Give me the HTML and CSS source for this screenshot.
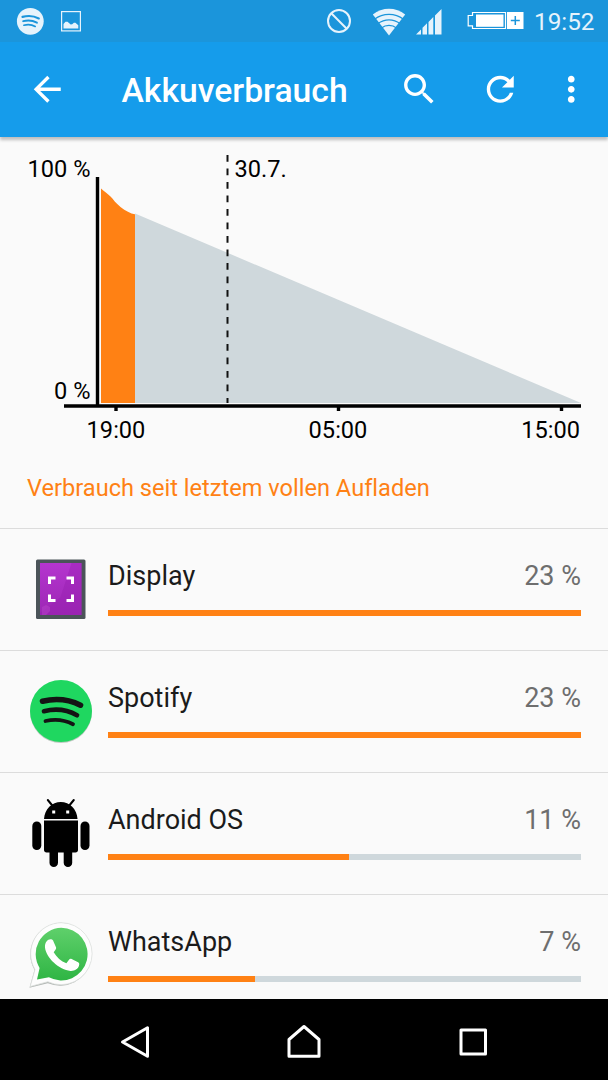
FILE: index.html
```html
<!DOCTYPE html>
<html lang="de">
<head>
  <meta charset="UTF-8">
  <meta name="viewport" content="width=device-width, initial-scale=1.0">
  <title>Akkuverbrauch</title>
  <link rel="stylesheet" href="styles.css">
</head>
<body>
  <div class="screen">
    <!-- Status bar -->
    <div class="status-bar">
      <svg class="status-spotify" width="28" height="28" viewBox="0 0 28 28">
        <circle cx="14.300" cy="14.300" r="13.400" fill="#e6f3fc"/>
        <g fill="none" stroke="#1b95db" stroke-linecap="round">
          <path d="M6.500 9.900c5.500-1.500 11.500-1 16.300 1.500" stroke-width="2.200"/>
          <path d="M7.200 14.200c4.800-1.300 9.500-.8 13.700 1.500" stroke-width="1.900"/>
          <path d="M7.900 18.200c3.900-1 7.900-.7 11.300 1.300" stroke-width="1.600"/>
        </g>
      </svg>
      <svg class="status-picture" width="20" height="21" viewBox="0 0 20 21">
        <rect x=".6" y=".6" width="18.800" height="19.300" fill="none" stroke="#e6f3fc" stroke-width="1.200"/>
        <path d="M2.500 17.500v-4.600l2-2.200h2l3.200 2.900 1.500-.3 1.700-1.600h1.500l2.900 2.600v3.200z" fill="#e6f3fc"/>
      </svg>
      <div class="spacer"></div>
      <svg class="status-block" width="24" height="24" viewBox="0 0 24 24">
        <circle cx="12" cy="12" r="11" fill="none" stroke="#e6f3fc" stroke-width="2"/>
        <path d="M4.300 4.300l15.400 15.400" stroke="#e6f3fc" stroke-width="2"/>
      </svg>
      <svg class="status-wifi" width="34" height="28" viewBox="0 0 34 28">
        <path d="M17 27.500L.8 6.400C10 -1.100 24 -1.100 33.200 6.400z" fill="#e6f3fc"/>
        <g fill="none" stroke="#1b95db" stroke-width="1.200">
          <path d="M2.500 11.200c8.500-6.500 20.500-6.500 29 0"/>
          <path d="M6 15.600c6.500-5 15.500-5 22 0"/>
          <path d="M9.500 20c4.300-3.500 10.700-3.500 15 0"/>
        </g>
      </svg>
      <svg class="status-signal" width="26" height="26" viewBox="0 0 26 26">
        <path d="M0 25.500l5-5v5zM6.500 25.500v-6.800l4.500-4.400v11.200zM12.500 25.500v-12.600l4.800-4.800v17.400zM19 25.500V6.500L25.500 0v25.500z" fill="#e6f3fc"/>
      </svg>
      <svg class="status-battery" width="57" height="20" viewBox="0 0 57 20">
        <path d="M5.500 1.500h33v16h-33v-2.700H1.200V4.500h4.300z" fill="none" stroke="#fff" stroke-width="1.200"/>
        <rect x="9" y="3.500" width="27.500" height="12.300" fill="#fff"/>
        <rect x="40" y="1" width="16.500" height="17" fill="#fff"/>
        <path d="M48.300 5v9M43.800 9.500h9" stroke="#1b95db" stroke-width="1.500"/>
      </svg>
      <span class="clock">19:52</span>
    </div>

    <!-- Toolbar -->
    <header class="toolbar">
      <svg class="icon" viewBox="0 0 24 24"><path d="M20 11H7.830l5.590-5.590L12 4l-8 8 8 8 1.410-1.410L7.830 13H20v-2z"/></svg>
      <h1>Akkuverbrauch</h1>
      <svg class="icon" viewBox="0 0 24 24"><path d="M15.500 14h-.79l-.28-.27C15.410 12.590 16 11.110 16 9.500 16 5.910 13.090 3 9.500 3S3 5.910 3 9.500 5.910 16 9.500 16c1.610 0 3.090-.59 4.230-1.570l.27.28v.79l5 4.990L20.490 19l-4.990-5zm-6 0C7.010 14 5 11.990 5 9.500S7.010 5 9.500 5 14 7.010 14 9.500 11.990 14 9.500 14z"/></svg>
      <svg class="icon icon-refresh" viewBox="0 0 24 24"><path d="M17.650 6.350C16.200 4.900 14.210 4 12 4c-4.420 0-7.990 3.580-7.990 8s3.570 8 7.990 8c3.730 0 6.840-2.550 7.730-6h-2.080c-.82 2.330-3.040 4-5.650 4-3.310 0-6-2.690-6-6s2.690-6 6-6c1.660 0 3.140.69 4.220 1.780L13 11h7V4l-2.350 2.350z"/></svg>
      <svg class="icon icon-more" viewBox="0 0 24 24"><path d="M12 8c1.100 0 2-.9 2-2s-.9-2-2-2-2 .9-2 2 .9 2 2 2zm0 2c-1.100 0-2 .9-2 2s.9 2 2 2 2-.9 2-2-.9-2-2-2zm0 6c-1.100 0-2 .9-2 2s.9 2 2 2 2-.9 2-2-.9-2-2-2z"/></svg>
    </header>

    <main class="content">
      <!-- Battery history chart -->
      <svg class="chart" width="608" height="311" viewBox="0 137 608 311">
        <path d="M135 213.500L581 403H135z" fill="#cfd8dc"/>
        <path d="M101 188.500c3 3 6 4.500 9.500 8 3 3 5 6.500 10 10.500 5 4 10 6.500 14.500 7.300V403h-34z" fill="#ff8114"/>
        <path d="M227.500 155v248" class="day-line"/>
        <path d="M97.500 177v229M64 406h517" class="axis"/>
        <path d="M116 406v5M338.500 406v5M561.500 406v5" class="axis"/>
        <text x="90.500" y="177" text-anchor="end">100 %</text>
        <text x="90.500" y="399" text-anchor="end">0 %</text>
        <text x="234.500" y="177">30.7.</text>
        <text x="116" y="437.500" text-anchor="middle">19:00</text>
        <text x="338" y="437.500" text-anchor="middle">05:00</text>
        <text x="580" y="437.500" text-anchor="end">15:00</text>
      </svg>

      <h2>Verbrauch seit letztem vollen Aufladen</h2>

      <ul class="usage">
        <li>
          <svg class="app-icon" viewBox="0 0 68 72">
            <defs>
              <linearGradient id="purple" x1="0" y1="0" x2="0" y2="1">
                <stop offset="0" stop-color="#b535cf"/>
                <stop offset="1" stop-color="#9c27b4"/>
              </linearGradient>
            </defs>
            <rect x="9" y="6.500" width="49.500" height="59.500" rx="1.500" fill="#4b5459"/>
            <rect x="13" y="10" width="41.500" height="52" fill="url(#purple)"/>
            <path d="M44.500 10h10v52H13v-1.500L33.500 44z" fill="#951eae" opacity=".4"/>
            <path d="M15 54l4-2 4 2v4l-4 4h-4z" fill="#b744ca" opacity=".5"/>
            <path d="M22.500 31v-6h6M39.500 25h6v6M22.500 41.500v6h6M39.500 47.500h6v-6" fill="none" stroke="#fff" stroke-width="3"/>
          </svg>
          <div class="usage-body">
            <div class="usage-text"><span>Display</span><span class="percent">23 %</span></div>
            <div class="bar"><div class="bar-fill" style="width: 100%"></div></div>
          </div>
        </li>
        <li>
          <svg class="app-icon" viewBox="0 0 68 72">
            <circle cx="34" cy="37" r="31" fill="#bfc9c2"/>
            <circle cx="34" cy="36" r="31" fill="#1fd760"/>
            <g fill="none" stroke="#141414" stroke-linecap="round">
              <path d="M15.500 26.200c13-3 26-2 38 4" stroke-width="5.600"/>
              <path d="M17 36.200c11.500-2.800 23-1.600 33 4" stroke-width="4.700"/>
              <path d="M18.500 46c9.500-2.200 19-1.200 27.500 3.200" stroke-width="3.800"/>
            </g>
          </svg>
          <div class="usage-body">
            <div class="usage-text"><span>Spotify</span><span class="percent">23 %</span></div>
            <div class="bar"><div class="bar-fill" style="width: 100%"></div></div>
          </div>
        </li>
        <li>
          <svg class="app-icon" viewBox="0 0 68 72">
            <path d="M17 22C17.500 12 25 5 33.800 5s16.200 7 16.700 17z"/>
            <path d="M20.800 3l4.500 5.500M46.800 3l-4.500 5.500" stroke="#000" stroke-width="2" stroke-linecap="round"/>
            <path d="M17 23.500h34V53c0 1.500-1 2.500-2.500 2.500h-29C18 55.500 17 54.500 17 53z"/>
            <rect x="5.300" y="24.500" width="9" height="28.500" rx="4.500"/>
            <rect x="53.500" y="24.500" width="9" height="28.500" rx="4.500"/>
            <rect x="22.500" y="46" width="8.500" height="24" rx="4.250"/>
            <rect x="36.700" y="46" width="8.500" height="24" rx="4.250"/>
            <rect x="25.200" y="13.500" width="3" height="3" fill="#fff"/>
            <rect x="39.200" y="13.500" width="3" height="3" fill="#fff"/>
          </svg>
          <div class="usage-body">
            <div class="usage-text"><span>Android OS</span><span class="percent">11 %</span></div>
            <div class="bar"><div class="bar-fill" style="width: 51%"></div></div>
          </div>
        </li>
        <li>
          <svg class="app-icon" viewBox="0 0 68 72">
            <defs>
              <linearGradient id="green" x1="0" y1="0" x2="0" y2="1">
                <stop offset="0" stop-color="#5fd06b"/>
                <stop offset="1" stop-color="#2fb544"/>
              </linearGradient>
            </defs>
            <path d="M34.300 3.800a31.500 31.500 0 1 1-13.500 60.500L2.500 68.800 7.500 51A31.500 31.500 0 0 1 34.300 3.800z" fill="#b4b9b6"/>
            <path d="M34.300 3.700a31 31 0 1 1-13.500 59L3.200 67.500 8 50.500A31 31 0 0 1 34.300 3.700z" fill="#fdfdfd" stroke="#dcdfdd" stroke-width=".8"/>
            <path d="M34.300 8.800a26.300 26.300 0 1 1-12.400 49.500L10 60.500l2.600-11.600A26.300 26.300 0 0 1 34.300 8.800z" fill="url(#green)"/>
            <path d="M19.500 22.500c1.500-2 3.500-2.700 5.500-2 1 .4 1.300 1.500 1.700 2.500l2.200 5c.5 1.200.2 2-.6 3l-1.600 2.200c3 5 7.300 9 12.700 11.100l2.600-3.500c.7-1 1.500-1.300 2.600-.8l6.500 3.300c1 .5 1.300 1.200 1.100 2.500-.7 4.200-4.500 6.300-8.700 6.100C32 51 19 38.500 18 28.500c-.2-2.500.3-4.500 1.500-6z" fill="#fff"/>
          </svg>
          <div class="usage-body">
            <div class="usage-text"><span>WhatsApp</span><span class="percent">7 %</span></div>
            <div class="bar"><div class="bar-fill" style="width: 31%"></div></div>
          </div>
        </li>
      </ul>
    </main>

    <!-- Navigation bar -->
    <nav class="nav-bar">
      <svg width="34" height="36" viewBox="0 0 34 36"><path d="M29.500 4.800v28.400L4.500 19z"/></svg>
      <svg width="34" height="36" viewBox="0 0 34 36"><path d="M2 33.200V16.500L17 3.500l15 13v16.700z"/></svg>
      <svg width="34" height="36" viewBox="0 0 34 36"><path d="M5 7h24.500v24H5z"/></svg>
    </nav>
  </div>
</body>
</html>
```
FILE: styles.css
```css
* {
  box-sizing: border-box;
}
body {
  margin: 0;
  font-family: Roboto, sans-serif;
  font-variant-ligatures: none;
  color: #1b1b1b;
  background-color: #fafafa;
}
svg {
  display: block;
  flex-shrink: 0;
}
.screen {
  display: flex;
  flex-direction: column;
  width: 608px;
  height: 1080px;
  overflow: hidden;
}

/* Status bar */
.status-bar {
  display: flex;
  align-items: center;
  flex-shrink: 0;
  height: 42px;
  padding: 0 14px 0 16px;
  background-color: #1b95db;
}
.status-picture {
  margin-left: 17px;
}
.spacer {
  flex: 1;
}
.status-wifi {
  margin: 2px 0 0 21px;
}
.status-signal {
  margin: 2px 0 0 10px;
}
.status-battery {
  margin-left: 25px;
}
.clock {
  width: 60px;
  margin-left: 10px;
  font-size: 24.3px;
  line-height: 42px;
  padding-top: 2px;
  white-space: nowrap;
  color: #e6f3fc;
}

/* Toolbar */
.toolbar {
  display: flex;
  align-items: center;
  flex-shrink: 0;
  height: 95px;
  padding: 0 17px 0 27px;
  background-color: #159ceb;
  box-shadow: 0 3px 3px rgba(0, 0, 0, 0.24);
  z-index: 1;
}
.toolbar h1 {
  flex: 1;
  margin: 2px 0 0 54px;
  font-size: 33.7px;
  font-weight: 500;
  line-height: 40px;
  color: #fff;
}
.icon {
  width: 40.5px;
  height: 40.5px;
  fill: #fff;
}
.icon-refresh {
  margin-left: 41px;
}
.icon-more {
  margin-left: 30px;
}

/* Content */
.content {
  flex: 1;
  min-height: 0;
  overflow: hidden;
}
.chart text {
  font-size: 23.6px;
  fill: #000;
}
.axis {
  fill: none;
  stroke: #000;
  stroke-width: 3.4;
}
.day-line {
  stroke: #111;
  stroke-width: 2;
  stroke-dasharray: 6.75 6.75;
}
.content h2 {
  height: 80px;
  margin: 0;
  padding-left: 27px;
  font-size: 23.6px;
  font-weight: 400;
  line-height: 81px;
  color: #ff8114;
}
.usage {
  margin: 0;
  padding: 0;
  list-style: none;
}
.usage li {
  display: flex;
  height: 122px;
  padding: 24px 27px 0;
  border-top: 1px solid #dcdcdc;
}
.app-icon {
  width: 68px;
  height: 72px;
}
.usage-body {
  flex: 1;
  margin: 1px 0 0 13px;
}
.usage-text {
  display: flex;
  justify-content: space-between;
  font-size: 27px;
  line-height: 44px;
}
.percent {
  color: #6e6e6e;
}
.bar {
  height: 6px;
  margin-top: 11.5px;
  background-color: #cfd8dc;
}
.bar-fill {
  height: 6px;
  background-color: #ff8114;
}

/* Navigation bar */
.nav-bar {
  display: flex;
  align-items: center;
  justify-content: center;
  gap: 135px;
  flex-shrink: 0;
  height: 81px;
  padding-top: 3px;
  background-color: #000;
}
.nav-bar path {
  fill: none;
  stroke: #fff;
  stroke-width: 3;
  stroke-linejoin: round;
}
```
